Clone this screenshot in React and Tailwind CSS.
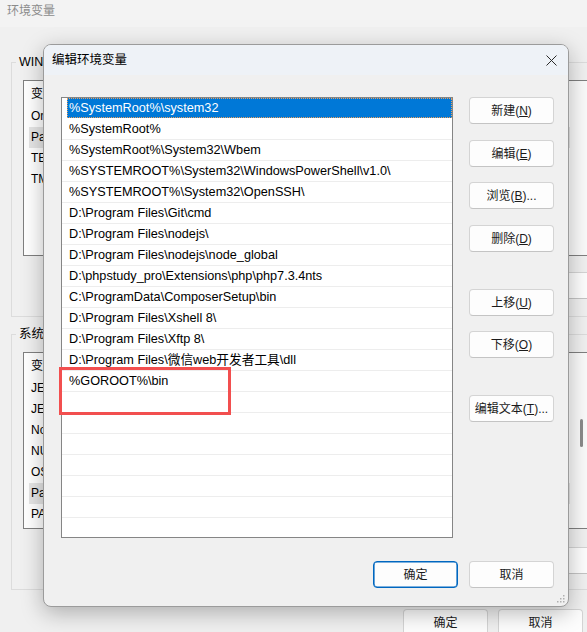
const font = { fontFamily: '"Liberation Sans", "Noto Sans CJK SC", sans-serif' }

const paths = [
  '%SystemRoot%\\system32',
  '%SystemRoot%',
  '%SystemRoot%\\System32\\Wbem',
  '%SYSTEMROOT%\\System32\\WindowsPowerShell\\v1.0\\',
  '%SYSTEMROOT%\\System32\\OpenSSH\\',
  'D:\\Program Files\\Git\\cmd',
  'D:\\Program Files\\nodejs\\',
  'D:\\Program Files\\nodejs\\node_global',
  'D:\\phpstudy_pro\\Extensions\\php\\php7.3.4nts',
  'C:\\ProgramData\\ComposerSetup\\bin',
  'D:\\Program Files\\Xshell 8\\',
  'D:\\Program Files\\Xftp 8\\',
  'D:\\Program Files\\微信web开发者工具\\dll',
  '%GOROOT%\\bin',
]

const rows = [...paths, ...Array(21 - paths.length).fill('')]

const userVars = ['OneDrive', 'Path', 'TEMP', 'TMP']
const sysVars = ['JETBRAINS_CLIENT_VM_OPTIONS', 'JETBRAINSCLIENT_VM_OPTIONS', 'NodeJs', 'NUMBER_OF_PROCESSORS', 'OS', 'Path', 'PATHEXT']

const Btn = ({ children, primary, className = '' }) => (
  <button
    className={`h-[27px] w-[85px] shrink-0 rounded-[4px] border bg-[#fdfdfd] text-[12px] text-[#1b1b1b] leading-none ${
      primary ? 'border-[#0067c0] shadow-[inset_0_0_0_0.6px_#0067c0]' : 'border-[#d4d4d4] border-b-[#c4c4c4]'
    } ${className}`}
  >
    {children}
  </button>
)

const VarList = ({ items, selected, thumb }) => (
  <div className="flex h-full w-[566px] border border-[#7f7f7f] bg-white">
    <div className="flex flex-1 flex-col">
      <div className="flex h-[25px] shrink-0 items-center pl-[7px] text-[12px]">
        <span className="w-[130px]">变量</span>
        <span>值</span>
      </div>
      {items.map((v, i) => (
        <div key={i} className="h-[21px] shrink-0 pl-[5px]">
          <div className={`h-full pl-[2px] leading-[21px] text-[12px] text-black ${i === selected ? 'bg-[#e5e5e5]' : ''}`}>
            {v}
          </div>
        </div>
      ))}
    </div>
    <div className="flex w-[18px] shrink-0 flex-col bg-[#fafafa]">
      {thumb && <div className="ml-[10px] mt-[66px] h-[28px] w-[3px] rounded-full bg-[#8a8a8a]" />}
    </div>
  </div>
)

export default function App() {
  return (
    <div className="relative h-[632px] w-[587px] overflow-hidden bg-[#f0f0f0]" style={font}>
      {/* background window */}
      <div className="flex w-[640px] flex-col">
        <div className="h-[27px] shrink-0 bg-[#f3f3f3] pl-[7px] pt-[3px] text-[12px] leading-[16px] text-[#8b8b8b]">环境变量</div>

        <fieldset className="ml-[11px] mt-[27px] w-[640px] border border-[#dcdcdc] pb-[17px] pl-[11px] pt-[10px]">
          <legend className="-ml-[7px] px-[3px] text-[12.5px] leading-[16px] text-black">WIN 的用户变量(U)</legend>
          <div className="h-[176px]">
            <VarList items={userVars} selected={1} />
          </div>
          <div className="mt-[16px] flex gap-[10px] pl-[292px]">
            <Btn>新建(N)...</Btn>
            <Btn>编辑(E)...</Btn>
            <Btn>删除(D)</Btn>
          </div>
        </fieldset>

        <fieldset className="ml-[11px] mt-[9px] w-[640px] border border-[#dcdcdc] pb-[15px] pl-[11px] pt-[10px]">
          <legend className="-ml-[7px] px-[3px] text-[12.5px] leading-[16px] text-black">系统变量(S)</legend>
          <div className="h-[177px]">
            <VarList items={sysVars} selected={5} thumb />
          </div>
          <div className="mt-[18px] flex gap-[10px] pl-[292px]">
            <Btn>新建(W)...</Btn>
            <Btn>编辑(I)...</Btn>
            <Btn>删除(L)</Btn>
          </div>
        </fieldset>

        <div className="mt-[19px] flex gap-[10px] pl-[403px]">
          <Btn>确定</Btn>
          <Btn>取消</Btn>
        </div>
      </div>

      {/* dialog */}
      <div className="absolute left-[43px] top-[44px] flex h-[563px] w-[526px] flex-col overflow-hidden rounded-[8px] border border-[#9b9b9b] bg-[#f0f0f0] shadow-[0_6px_22px_rgba(0,0,0,0.28)]">
        <div className="flex h-[30px] shrink-0 items-center justify-between bg-[#eef2f7] pl-[8px] pr-[9px]">
          <span className="pt-[1px] text-[12.5px] text-black">编辑环境变量</span>
          <svg width="11" height="11" viewBox="0 0 11 11" className="mr-[2px]">
            <path d="M0.5 0.5 L10.5 10.5 M10.5 0.5 L0.5 10.5" stroke="#2a2a2a" strokeWidth="1" />
          </svg>
        </div>

        <div className="flex flex-1 flex-col pl-[17px] pr-[14px] pt-[22px]">
          <div className="flex gap-[16px]">
            <div className="relative flex h-[441px] w-[392px] shrink-0 flex-col overflow-hidden border border-[#858585] bg-white">
              {rows.map((p, i) => (
                <div
                  key={i}
                  className={`h-[21px] shrink-0 border-b pl-[5px] ${i === 0 ? 'border-transparent' : 'border-[#ededed]'}`}
                >
                  <div
                    className={`h-[20px] whitespace-nowrap pl-[2px] text-[12.7px] leading-[20px] ${
                      i === 0 ? 'bg-[#0078d7] text-white outline outline-1 -outline-offset-1 outline-dotted outline-[#e8a060]' : 'text-black'
                    }`}
                  >
                    {p}
                  </div>
                </div>
              ))}
            </div>

            <div className="flex flex-col">
              <Btn>新建(<u>N</u>)</Btn>
              <Btn className="mt-[16px]">编辑(<u>E</u>)</Btn>
              <Btn className="mt-[15px]">浏览(<u>B</u>)...</Btn>
              <Btn className="mt-[16px]">删除(<u>D</u>)</Btn>
              <Btn className="mt-[37px]">上移(<u>U</u>)</Btn>
              <Btn className="mt-[15px]">下移(<u>O</u>)</Btn>
              <Btn className="mt-[37px]">编辑文本(<u>T</u>)...</Btn>
            </div>
          </div>

          <div className="mt-[23px] flex justify-end gap-[11px]">
            <Btn primary>确定</Btn>
            <Btn>取消</Btn>
          </div>
        </div>

        <svg width="8" height="8" viewBox="0 0 8 8" className="absolute bottom-[3px] right-[3px]">
          <rect x="6" y="0" width="1.5" height="1.5" fill="#b0b0b0" />
          <rect x="3" y="3" width="1.5" height="1.5" fill="#b0b0b0" />
          <rect x="6" y="3" width="1.5" height="1.5" fill="#b0b0b0" />
          <rect x="0" y="6" width="1.5" height="1.5" fill="#b0b0b0" />
          <rect x="3" y="6" width="1.5" height="1.5" fill="#b0b0b0" />
          <rect x="6" y="6" width="1.5" height="1.5" fill="#b0b0b0" />
        </svg>
      </div>

      {/* red highlight */}
      <div className="absolute left-[59px] top-[367px] h-[48px] w-[172px] border-[3px] border-[#f24f4f]" />
    </div>
  )
}
